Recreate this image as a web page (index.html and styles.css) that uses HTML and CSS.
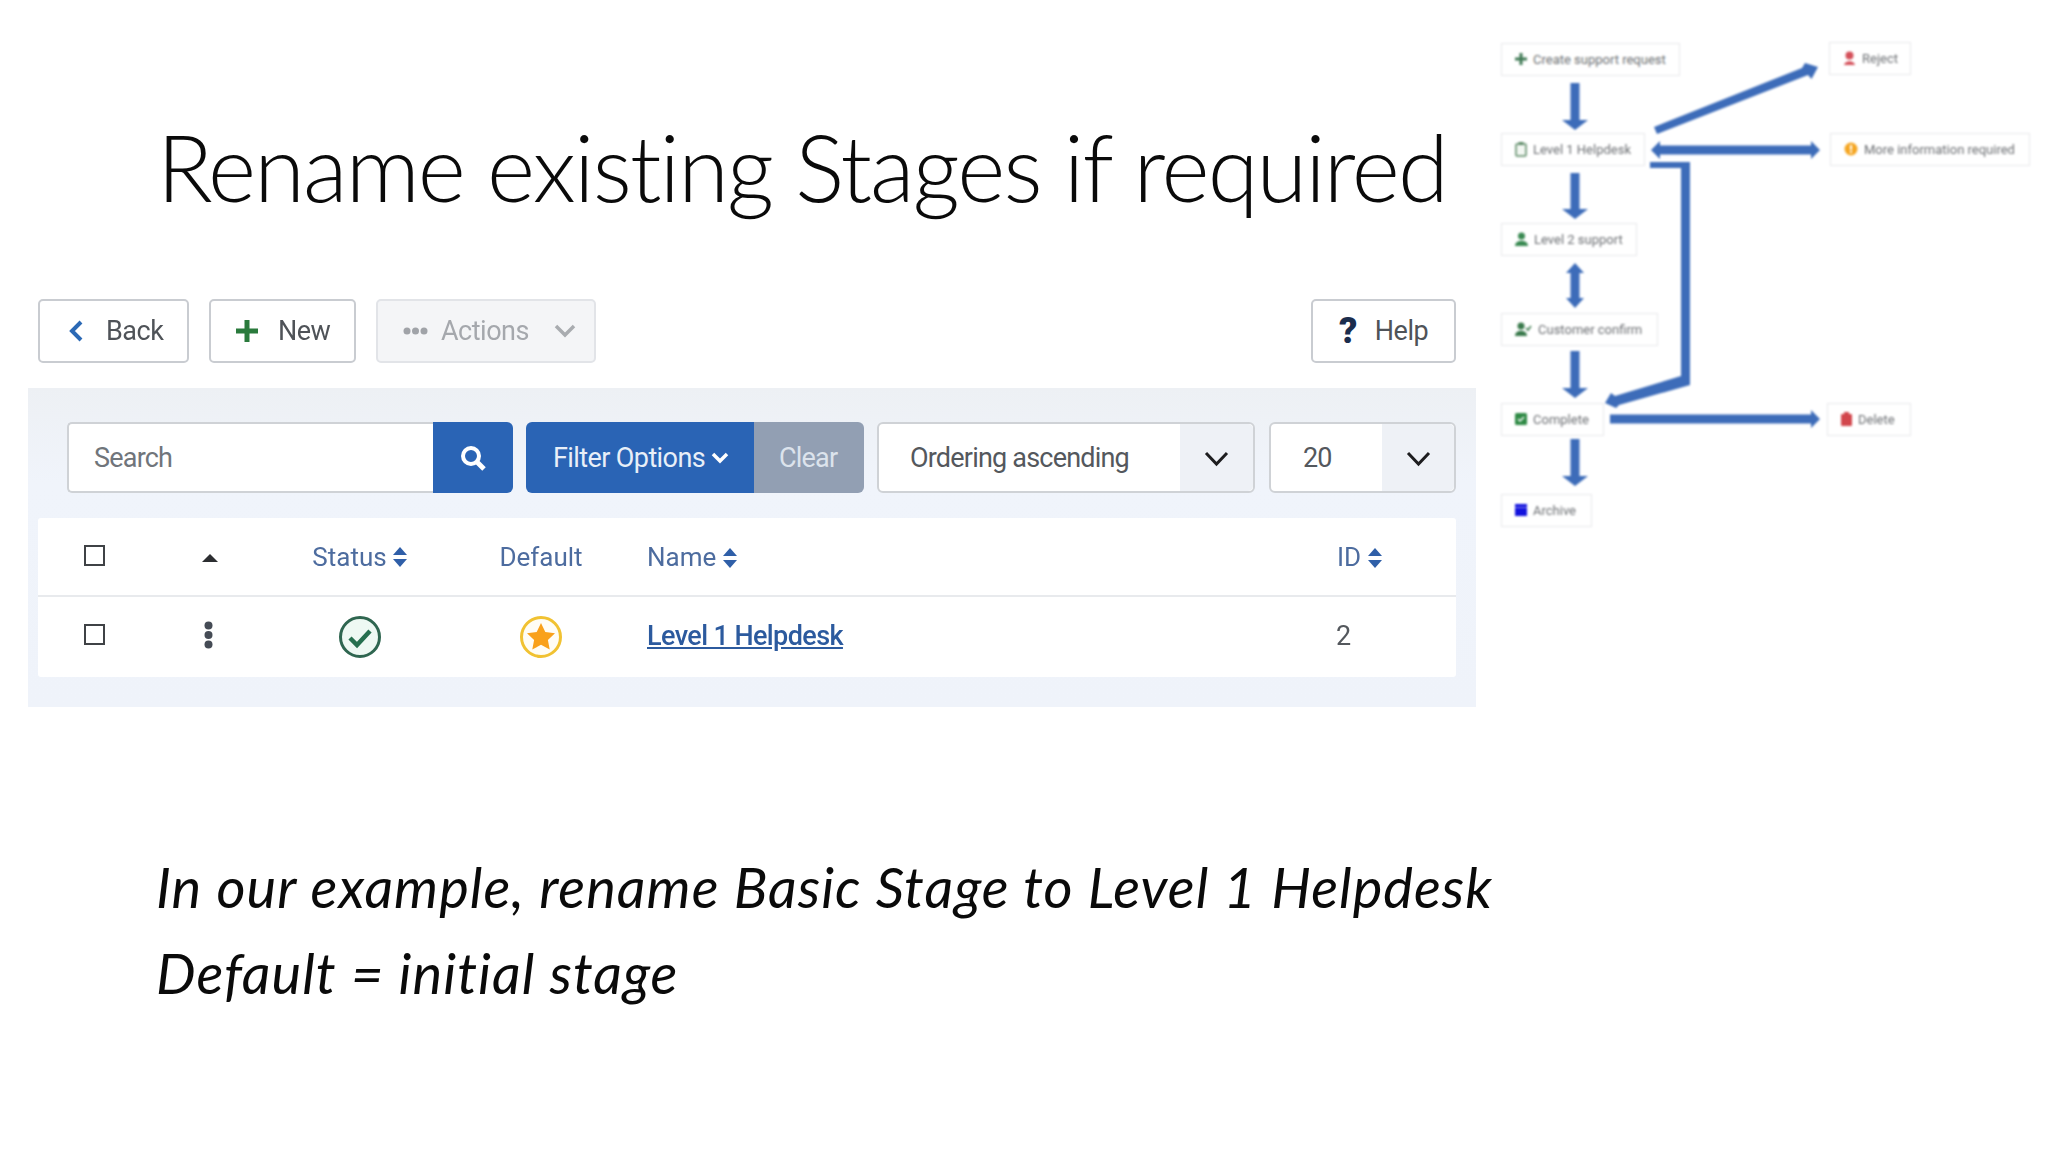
FILE: index.html
```html
<!DOCTYPE html>
<html lang="en">
<head>
    <meta charset="UTF-8">
    <title>Rename existing Stages</title>
    <link rel="stylesheet" href="styles.css">
</head>
<body>
<div class="slide">
    <h1 class="title">Rename existing Stages if required</h1>

    <div class="shot">
        <div class="toolbar">
            <button class="btn btn-back">
                <svg width="14" height="22" viewBox="0 0 14 22"><path d="M12 2 3 11l9 9" fill="none" stroke="#2b69b5" stroke-width="4"/></svg>
                Back
            </button>
            <button class="btn btn-new">
                <svg width="22" height="22" viewBox="0 0 22 22"><path d="M11 0v22M0 11h22" stroke="#2a7a3c" stroke-width="5"/></svg>
                New
            </button>
            <button class="btn btn-actions">
                <svg width="25" height="10" viewBox="0 0 25 10"><circle cx="4" cy="5" r="3.500" fill="#a0a3a8"/><circle cx="12.500" cy="5" r="3.500" fill="#a0a3a8"/><circle cx="21" cy="5" r="3.500" fill="#a0a3a8"/></svg>
                <span class="actions-label">Actions</span>
                <svg width="22" height="14" viewBox="0 0 22 14"><path d="m2 2 9 9 9-9" fill="none" stroke="#a9acb0" stroke-width="3.500"/></svg>
            </button>
            <button class="btn btn-help"><span class="help-mark">?</span>Help</button>
        </div>

        <div class="panel">
            <div class="filters">
                <div class="search-group">
                    <div class="search-input">Search</div>
                    <div class="search-btn">
                        <svg width="28" height="28" viewBox="0 0 28 28"><circle cx="12" cy="12" r="8" fill="none" stroke="#fff" stroke-width="4"/><path d="m18 18 7 7" stroke="#fff" stroke-width="5"/></svg>
                    </div>
                </div>
                <div class="filter-group">
                    <div class="filter-btn">Filter Options
                        <svg width="18" height="12" viewBox="0 0 18 12"><path d="m2 2 7 7 7-7" fill="none" stroke="#fff" stroke-width="3.500"/></svg>
                    </div>
                    <div class="clear-btn">Clear</div>
                </div>
                <div class="select select-order">
                    <span class="select-value">Ordering ascending</span>
                    <span class="select-arrow"><svg width="25" height="16" viewBox="0 0 25 16"><path d="m2 2 10.500 11L23 2" fill="none" stroke="#1d1d1f" stroke-width="3"/></svg></span>
                </div>
                <div class="select select-limit">
                    <span class="select-value">20</span>
                    <span class="select-arrow"><svg width="25" height="16" viewBox="0 0 25 16"><path d="m2 2 10.500 11L23 2" fill="none" stroke="#1d1d1f" stroke-width="3"/></svg></span>
                </div>
            </div>

            <div class="list">
                <div class="list-row list-head">
                    <span class="cell-center cell-check"><span class="check"></span></span>
                    <span class="cell-center"><span class="caret-up"></span></span>
                    <span class="cell-center">Status <span class="sort"></span></span>
                    <span class="cell-center">Default</span>
                    <span class="cell-name">Name <span class="sort"></span></span>
                    <span>ID <span class="sort"></span></span>
                </div>
                <div class="list-row list-item">
                    <span class="cell-center cell-check"><span class="check"></span></span>
                    <span class="cell-center cell-dots">
                        <svg width="9" height="28" viewBox="0 0 9 28"><circle cx="4.500" cy="4.500" r="4" fill="#454b55"/><circle cx="4.500" cy="14" r="4" fill="#454b55"/><circle cx="4.500" cy="23.500" r="4" fill="#454b55"/></svg>
                    </span>
                    <span class="cell-center">
                        <svg width="44" height="44" viewBox="0 0 44 44"><circle cx="22" cy="22" r="19.500" fill="#eef9f3" stroke="#2f6650" stroke-width="3"/><path d="m12 23 7 7 13-14" fill="none" stroke="#26704f" stroke-width="4.500"/></svg>
                    </span>
                    <span class="cell-center">
                        <svg width="44" height="44" viewBox="0 0 44 44"><circle cx="22" cy="22" r="19.500" fill="#fffdf5" stroke="#f1c232" stroke-width="3"/><path d="m22 8 4.300 9 9.700 1.200-7.100 6.700 1.800 9.600-8.700-4.700-8.700 4.700 1.800-9.600L8 18.200l9.700-1.200z" fill="#f9a11b"/></svg>
                    </span>
                    <span class="cell-name"><a class="stage-link" href="#">Level 1 Helpdesk</a></span>
                    <span class="cell-id">2</span>
                </div>
            </div>
        </div>
    </div>

    <div class="notes">
        <p>In our example, rename Basic Stage to Level 1 Helpdesk</p>
        <p>Default = initial stage</p>
    </div>

    <div class="flow">
        <svg class="flow-arrows" width="568" height="540" viewBox="1480 0 568 540">
            <g fill="#3d6cb9">
                <path d="M1570.500 83h9v37h8.500l-13 10-13-10h8.500z"/>
                <path d="M1570.500 173h9v36h8.500l-13 10-13-10h8.500z"/>
                <path d="M1575 263l9 10h-4.500v25h4.500l-9 10-9-10h4.500v-25H1566z"/>
                <path d="M1570.500 351h9v37h8.500l-13 10-13-10h8.500z"/>
                <path d="M1570.500 439h9v37h8.500l-13 10-13-10h8.500z"/>
                <path d="M1654 127 1802 68l3-5 13 4-6.500 12-3.500-4L1657 134z"/>
                <path d="M1651 150l9-9v4.500h151V141l9 9-9 9v-4.500h-151v4.500z"/>
                <path d="M1650 162h40v223l-71 20-3 3-11-5 6-10 4 3 66-20V168h-31z"/>
                <path d="M1610 414.500h201V410l9 9-9 9v-4.500h-201z"/>
            </g>
        </svg>

        <div class="node node-create">
            <svg width="12" height="12" viewBox="0 0 12 12"><path d="M6 0v12M0 6h12" stroke="#3f7a55" stroke-width="3"/></svg>
            Create support request
        </div>
        <div class="node node-reject">
            <svg width="13" height="15" viewBox="0 0 13 15"><circle cx="6.500" cy="4.500" r="4" fill="#d4505a"/><path d="M1 14c1-5 10-5 11 0z" fill="#d4505a"/></svg>
            Reject
        </div>
        <div class="node node-level1">
            <svg width="12" height="15" viewBox="0 0 12 15"><rect x="1" y="2" width="10" height="12" rx="1" fill="#f2f7f2" stroke="#5c8a66" stroke-width="1.500"/><rect x="3.500" y="0" width="5" height="3" fill="#5c8a66"/></svg>
            Level 1 Helpdesk
        </div>
        <div class="node node-info">
            <svg width="14" height="14" viewBox="0 0 14 14"><circle cx="7" cy="7" r="6.500" fill="#f5a623"/><rect x="6" y="3" width="2" height="5" fill="#fff"/><rect x="6" y="9" width="2" height="2" fill="#fff"/></svg>
            More information required
        </div>
        <div class="node node-level2">
            <svg width="13" height="14" viewBox="0 0 13 14"><circle cx="6.500" cy="4" r="3.500" fill="#3a8a52"/><path d="M0 14c0-7 13-7 13 0z" fill="#3a8a52"/></svg>
            Level 2 support
        </div>
        <div class="node node-confirm">
            <svg width="17" height="14" viewBox="0 0 17 14"><circle cx="6" cy="4" r="3.500" fill="#3a7a4c"/><path d="M0 14c0-7 12-7 12 0z" fill="#3a7a4c"/><path d="m11 6 2 2 3-4" fill="none" stroke="#3a7a4c" stroke-width="1.500"/></svg>
            Customer confirm
        </div>
        <div class="node node-complete">
            <svg width="12" height="12" viewBox="0 0 12 12"><rect width="12" height="12" rx="1.500" fill="#2f8a45"/><path d="m3 6 2 2 4-4" fill="none" stroke="#fff" stroke-width="1.500"/></svg>
            Complete
        </div>
        <div class="node node-delete">
            <svg width="11" height="14" viewBox="0 0 11 14"><rect x="0" y="2" width="11" height="12" rx="1" fill="#d2464c"/><rect x="3" y="0" width="5" height="2" fill="#d2464c"/></svg>
            Delete
        </div>
        <div class="node node-archive">
            <svg width="12" height="12" viewBox="0 0 12 12"><rect width="12" height="12" fill="#1212dd"/><rect y="3" width="12" height="1" fill="#8a8af0"/></svg>
            Archive
        </div>
    </div>
</div>
</body>
</html>
```

FILE: styles.css
```css
* { box-sizing: border-box; }
body { margin: 0; background: #fff; font-family: "Roboto", "Liberation Sans", sans-serif; }
.slide { position: relative; width: 2048px; height: 1152px; overflow: hidden; background: #fff; }

.title { margin: 0; padding: 107px 0 0 157px; height: 299px; font-family: "Lato", "Open Sans", sans-serif; font-weight: 300; font-size: 92px; line-height: 120px; color: #0a0a0a; white-space: nowrap; letter-spacing: -1.85px; }

.shot { margin-left: 28px; width: 1448px; filter: blur(0.4px); font-size: 27px; letter-spacing: -0.8px; }

.toolbar { display: flex; height: 64px; margin-left: 10px; width: 1418px; gap: 20px; margin-bottom: 25px; }
.btn { display: flex; align-items: center; height: 64px; padding: 0; background: #fff; border: 2px solid #c9ccd1; border-radius: 5px; font-family: inherit; font-size: 27px; letter-spacing: -0.5px; color: #4f5358; }
.btn-back { width: 151px; padding-left: 29px; gap: 23px; }
.btn-new { width: 147px; padding-left: 25px; gap: 20px; }
.btn-actions { width: 220px; padding-left: 25px; background: #f4f5f7; border-color: #e2e4e8; color: #a5a8ad; }
.actions-label { margin: 0 25px 0 13px; }
.btn-help { width: 145px; margin-left: auto; padding-left: 26px; gap: 18px; }
.help-mark { font-weight: 900; font-size: 36px; color: #1b2d4d; }

.panel { height: 319px; padding: 34px 20px 30px 10px; background: linear-gradient(#edf0f4, #f0f4fb 30%, #eff3fa); }

.filters { display: flex; height: 71px; margin-left: 29px; gap: 13px; }
.search-group { display: flex; width: 446px; }
.search-input { flex: 1; display: flex; align-items: center; padding-left: 25px; background: #fff; border: 2px solid #cfd2d6; border-right: 0; border-radius: 5px 0 0 5px; color: #70757b; }
.search-btn { width: 80px; display: flex; align-items: center; justify-content: center; background: #2a64b5; border-radius: 0 6px 6px 0; }
.filter-group { display: flex; width: 338px; }
.filter-btn { width: 228px; display: flex; align-items: center; gap: 6px; padding-left: 27px; background: #2a64b5; color: #e8eff8; border-radius: 6px 0 0 6px; letter-spacing: -0.6px; }
.clear-btn { flex: 1; display: flex; align-items: center; padding-left: 25px; background: #929fb3; color: #dce3ec; border-radius: 0 6px 6px 0; }

.select { display: flex; background: #fff; border: 2px solid #cfd2d6; border-radius: 6px; color: #54585d; }
.select-value { flex: 1; display: flex; align-items: center; }
.select-arrow { display: flex; align-items: center; justify-content: center; padding-top: 2px; background: #eef1f6; border-radius: 0 5px 5px 0; }
.select-order { width: 378px; }
.select-order .select-value { padding-left: 31px; }
.select-order .select-arrow { width: 73px; }
.select-limit { width: 187px; margin-left: 1px; }
.select-limit .select-value { padding-left: 32px; }
.select-limit .select-arrow { width: 72px; }

.list { margin-top: 25px; background: #fff; border-radius: 3px; }
.list-row { display: grid; grid-template-columns: 113px 118px 182px 180px 706px 119px; align-items: center; }
.list-head { height: 79px; border-bottom: 2px solid #e8eaed; color: #4d6c9f; font-size: 26px; letter-spacing: 0; }
.list-item { height: 80px; color: #54585d; }
.cell-center { display: flex; justify-content: center; align-items: center; gap: 6px; }
.cell-name { padding-left: 16px; }
.cell-check { margin-top: -2px; }
.list-item .cell-check { margin-top: -6px; }
.cell-dots { margin-left: -4px; margin-top: -4px; }
.check { width: 21px; height: 21px; border: 2px solid #3f4246; }
.caret-up { width: 0; height: 0; margin-top: 2px; border: 8px solid transparent; border-top: 0; border-bottom: 8px solid #2c2e31; }
.sort { display: inline-block; position: relative; width: 15px; height: 20px; vertical-align: -2px; }
.sort::before, .sort::after { content: ""; position: absolute; left: 0; border: 7.500px solid transparent; }
.sort::before { top: 0; border-top: 0; border-bottom: 8px solid #2f5fa8; }
.sort::after { bottom: 0; border-bottom: 0; border-top: 8px solid #2f5fa8; }
.stage-link { position: relative; top: -1px; color: #2c5a9e; font-size: 27px; font-weight: 500; letter-spacing: -0.6px; text-decoration: underline; }
.cell-id { position: relative; top: -1px; left: -1px; font-size: 27px; }

.notes { margin: 137px 0 0 156px; font-family: "Lato", "Open Sans", sans-serif; font-style: italic; font-size: 56px; line-height: 86px; letter-spacing: 1.05px; color: #0a0a0a; }
.notes p { margin: 0; white-space: nowrap; }

.flow { position: absolute; left: 0; top: 0; width: 2048px; height: 540px; filter: blur(0.8px); }
.flow-arrows { position: absolute; left: 1480px; top: 0; }
.node { position: absolute; display: flex; align-items: center; gap: 6px; height: 33px; padding: 0 0 1px 13px; background: #fff; border: 1.500px solid #e8e9eb; font-size: 13px; color: #6c6f73; white-space: nowrap; }
.node-create { left: 1501px; top: 43px; width: 179px; }
.node-reject { left: 1829px; top: 42px; width: 82px; }
.node-level1 { left: 1501px; top: 133px; width: 144px; }
.node-info { left: 1830px; top: 133px; width: 200px; }
.node-level2 { left: 1501px; top: 223px; width: 136px; }
.node-confirm { left: 1501px; top: 313px; width: 157px; }
.node-complete { left: 1501px; top: 403px; width: 103px; }
.node-delete { left: 1827px; top: 403px; width: 84px; }
.node-archive { left: 1501px; top: 494px; width: 91px; }
```
